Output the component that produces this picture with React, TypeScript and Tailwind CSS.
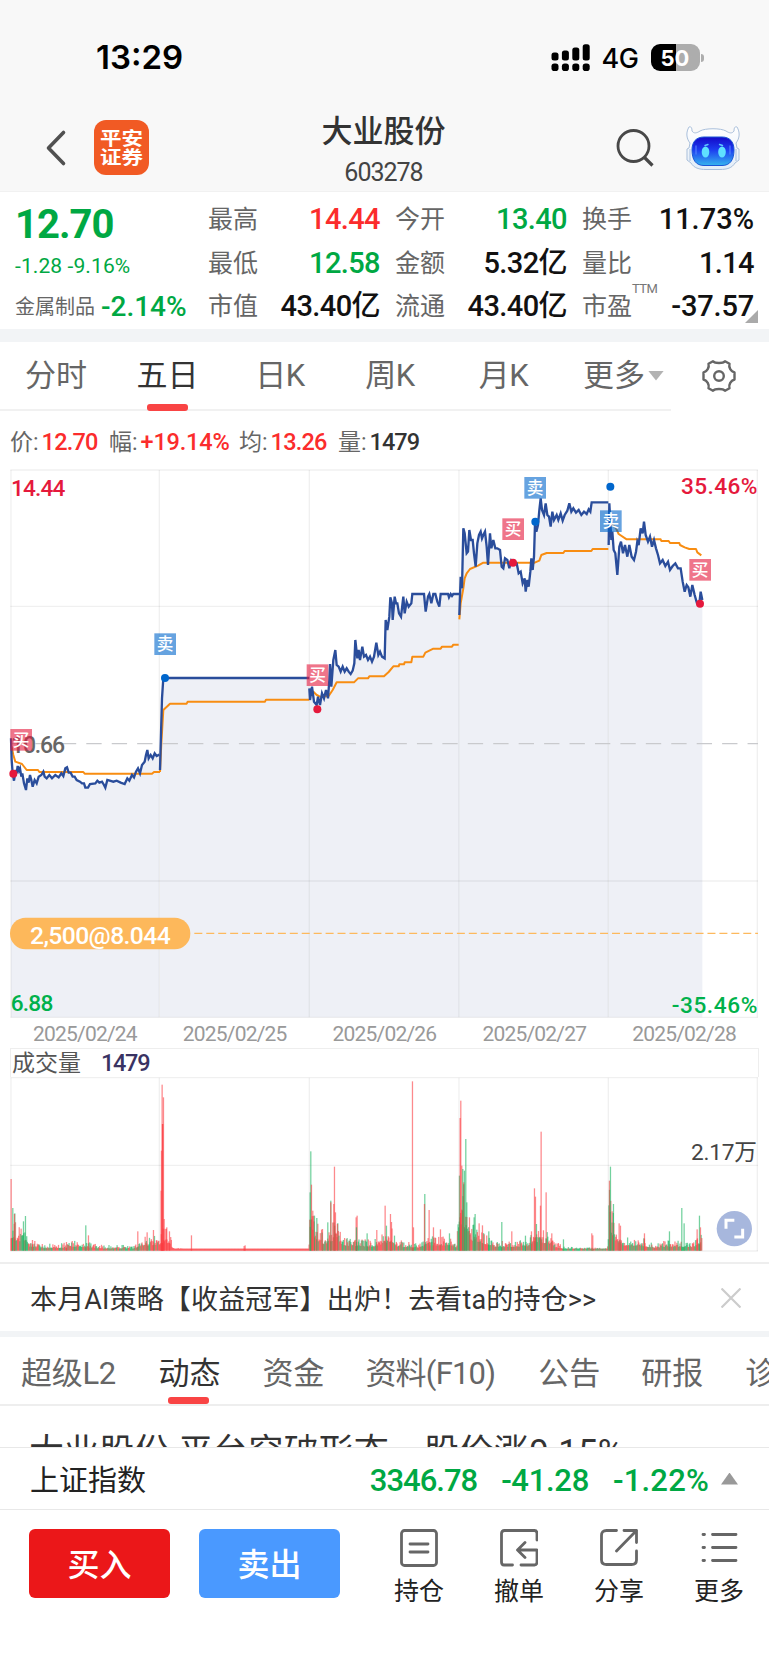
import React from 'react'

// price chart units: 3 per css pixel
const priceDays = [
    '33,835 35,900 38,940 42,962 47,930 50,940 53,918 57,932 60,925 64,950 67,940 72,970 78,990 82,955 86,968 90,945 94,960 98,980 104,960 110,970 116,950 124,945 130,935 134,950 140,955 148,945 156,955 166,945 176,952 184,940 190,948 196,925 201,922 206,938 212,938 218,950 224,950 230,960 240,965 246,970 252,970 256,983 264,983 270,972 286,970 292,962 298,968 306,965 312,975 316,983 322,960 340,965 350,962 362,968 374,972 382,955 388,962 396,945 402,952 408,935 414,925 420,940 426,915 434,905 438,885 442,870 446,895 452,885 458,895 464,880 470,888 478,884',
    '480,930 486,715 490,654 928,654',
    '928,685 930,720 936,680 942,725 950,735 954,710 960,735 966,700 972,715 978,690 984,715 988,660 990,612 994,680 1000,600 1006,570 1010,615 1016,620 1022,635 1028,620 1034,635 1040,625 1046,635 1052,642 1058,632 1063,610 1066,540 1072,595 1076,570 1080,600 1087,560 1092,590 1098,585 1104,600 1110,590 1116,605 1122,590 1129,548 1135,585 1140,575 1146,590 1154,595 1157,480 1162,510 1168,470 1171,412 1176,430 1178,480 1184,410 1188,430 1192,430 1197,460 1203,470 1210,410 1214,460 1220,425 1226,440 1234,430 1237,402 1272,402 1277,455 1284,410 1288,402 1294,430 1300,402 1306,402 1312,425 1318,440 1322,402 1344,402 1347,412 1352,402 1356,408 1360,402 1378,402',
    '1378,465 1382,350 1386,385 1390,205 1394,220 1400,280 1404,275 1408,210 1413,240 1418,240 1422,280 1427,320 1432,250 1437,225 1442,215 1446,235 1450,225 1455,215 1460,260 1464,315 1470,220 1474,265 1480,240 1486,265 1492,265 1500,270 1505,320 1510,325 1515,295 1522,300 1528,325 1534,300 1542,305 1550,310 1556,340 1562,335 1568,370 1574,355 1577,395 1582,360 1586,380 1591,335 1594,295 1598,330 1602,290 1605,190 1609,215 1614,195 1618,150 1622,115 1626,150 1632,165 1637,130 1642,165 1647,170 1652,200 1657,155 1662,180 1670,165 1675,180 1682,160 1688,182 1694,165 1702,152 1708,130 1714,155 1720,145 1728,158 1736,150 1744,165 1752,155 1760,162 1766,148 1771,155 1775,127 1825,127',
    '1826,255 1828,130 1834,240 1837,215 1841,270 1846,280 1852,345 1858,260 1863,245 1869,280 1875,255 1882,290 1888,255 1895,290 1902,300 1908,275 1912,245 1916,255 1922,205 1928,220 1932,185 1937,225 1944,245 1950,230 1956,260 1962,240 1968,265 1974,285 1980,310 1988,300 1996,318 2004,305 2010,330 2018,318 2026,310 2034,325 2042,325 2048,365 2054,395 2060,375 2065,382 2071,410 2077,375 2084,405 2091,430 2098,430 2102,395 2107,420',
]

const averageDays = [
    '35,860 40,885 46,905 66,912 80,930 114,930 118,936 250,936 254,941 456,941 462,936 480,936',
    '480,936 484,850 490,750 510,731 560,731 563,725 795,725 798,719 928,719',
    '928,700 940,695 950,705 960,710 986,708 998,690 1010,667 1062,667 1074,655 1104,655 1108,649 1152,649 1166,636 1180,619 1196,619 1198,613 1212,613 1214,607 1234,607 1237,590 1270,590 1276,578 1288,572 1300,566 1322,566 1326,560 1356,560 1360,554 1376,554',
    '1378,478 1382,430 1390,385 1394,355 1400,340 1410,327 1434,317 1450,308 1604,308 1618,302 1624,285 1640,279 1690,279 1694,273 1774,273 1778,267 1825,267',
    '1832,190 1848,205 1856,222 1880,238 1982,238 1984,243 2006,243 2010,249 2038,249 2040,255 2054,262 2068,267 2088,267 2092,277 2104,286',
]

const marks = [
    { type: '买', x: 31, y: 807, dotX: 40, dotY: 941 },
    { type: '卖', x: 463, y: 520, dotX: 495, dotY: 654 },
    { type: '买', x: 920, y: 613, dotX: 952, dotY: 748 },
    { type: '买', x: 1507, y: 175, dotX: 1539, dotY: 308 },
    { type: '卖', x: 1573, y: 51, dotX: 1606, dotY: 185 },
    { type: '卖', x: 1800, y: 151, dotX: 1831, dotY: 80 },
    { type: '买', x: 2068, y: 297, dotX: 2100, dotY: 431 },
]

const dayLines = [33, 478, 928, 1377, 1825, 2272]
const dates = ['2025/02/24', '2025/02/25', '2025/02/26', '2025/02/27', '2025/02/28']

// [x, height] upper bound of the quiet minutes
const volumeRange: [number, number][] = [
    [33, 105], [50, 80], [78, 70], [86, 36], [130, 20], [200, 24], [230, 34], [300, 18], [400, 18],
    [425, 40], [478, 52], [496, 75], [510, 50], [518, 12], [560, 4], [925, 6], [930, 130], [945, 95],
    [975, 50], [1008, 100], [1030, 42], [1120, 34], [1175, 80], [1190, 34], [1250, 22], [1290, 45],
    [1345, 44], [1370, 20], [1378, 240], [1392, 200], [1410, 90], [1450, 60], [1490, 28], [1580, 36],
    [1605, 70], [1640, 62], [1665, 28], [1700, 12], [1760, 10], [1822, 8], [1828, 190], [1845, 85],
    [1875, 40], [1920, 44], [1960, 22], [2010, 34], [2080, 28], [2108, 60],
]

const volumeSpikes: [number, number, number][] = [
    [33, 215, 1], [38, 128, 0], [44, 112, 0], [43, 110, 1], [70, 88, 0], [76, 104, 0], [97, 32, 1], [199, 26, 1],
    [257, 76, 0], [265, 46, 1], [413, 58, 1], [441, 55, 1], [460, 62, 1], [483, 180, 1], [484, 300, 1],
    [486, 498, 1], [487, 380, 1], [488, 380, 1], [490, 460, 1], [492, 95, 1], [500, 70, 1], [508, 58, 1], [574, 46, 1],
    [732, 14, 1], [735, 16, 1], [930, 175, 0], [932, 298, 0], [934, 198, 1], [938, 120, 1], [943, 105, 0],
    [950, 98, 0], [967, 65, 1], [983, 85, 0], [992, 150, 0], [992, 145, 1], [1001, 140, 1], [1003, 252, 1],
    [1006, 115, 1], [1012, 80, 1], [1068, 100, 1], [1071, 105, 1], [1069, 70, 0], [1101, 52, 0], [1130, 62, 1],
    [1155, 135, 1], [1159, 75, 0], [1171, 110, 1], [1174, 86, 1], [1237, 508, 1], [1240, 70, 1], [1274, 170, 0],
    [1273, 140, 1], [1287, 122, 1], [1300, 70, 1], [1321, 64, 1], [1348, 52, 0], [1378, 225, 0], [1382, 450, 1],
    [1380, 398, 1], [1385, 255, 1], [1388, 245, 0], [1391, 205, 1], [1393, 240, 0], [1397, 335, 0], [1400, 145, 0],
    [1408, 100, 1], [1422, 100, 0], [1425, 110, 0], [1437, 82, 1], [1447, 76, 1], [1466, 58, 0], [1505, 86, 0],
    [1535, 58, 1], [1576, 45, 0], [1594, 58, 1], [1603, 187, 1], [1606, 162, 1], [1609, 80, 0], [1623, 357, 1],
    [1621, 135, 1], [1638, 175, 1], [1655, 52, 1], [1690, 34, 0], [1775, 52, 1], [1778, 46, 1], [1828, 210, 1],
    [1831, 252, 0], [1836, 118, 1], [1840, 140, 0], [1857, 82, 1], [1861, 75, 1], [1933, 52, 1], [2008, 58, 0],
    [2045, 128, 0], [2052, 82, 0], [2091, 64, 1], [2098, 105, 0], [2101, 70, 1],
]

const quietVolume = () => {
    const bars: [number, number, number][] = []
    let seed = 41
    const next = () => {
        seed = (seed * 1103515245 + 12345) % 2147483648
        return seed / 2147483648
    }
    let k = 0
    for (let x = 33; x <= 2106; x += 1.87) {
        while (k < volumeRange.length - 2 && volumeRange[k + 1][0] < x) k++
        const [x0, h0] = volumeRange[k]
        const [x1, h1] = volumeRange[k + 1]
        const top = h0 + ((x - x0) / (x1 - x0)) * (h1 - h0)
        const r = next()
        const height = Math.max(6, top * (0.35 + 0.65 * r * r))
        const red = x > 478 && x < 928 ? 1 : next() > 0.48 ? 1 : 0
        bars.push([x, height, red])
    }
    return bars
}

const volumeBars = [...quietVolume(), ...volumeSpikes]

const quotes = [
    { label: '最高', value: '14.44', color: 'text-[#fb2c2c]' },
    { label: '今开', value: '13.40', color: 'text-[#00a843]' },
    { label: '换手', value: '11.73%', color: 'text-[#111] tracking-[0px]' },
    { label: '最低', value: '12.58', color: 'text-[#00a843]' },
    { label: '金额', value: '5.32亿', color: 'text-[#111]' },
    { label: '量比', value: '1.14', color: 'text-[#111]' },
    { label: '市值', value: '43.40亿', color: 'text-[#111]' },
    { label: '流通', value: '43.40亿', color: 'text-[#111]' },
    { label: '市盈', value: '-37.57', color: 'text-[#111] tracking-[-0.2px]', sup: 'TTM' },
]

const StatusBar = () => (
    <div className="h-[100px] pt-[15px] pl-[96px] pr-[65px] flex items-center justify-between font-[family-name:Inter,sans-serif] text-black">
        <span className="text-[33px] leading-none font-semibold">13:29</span>
        <div className="flex items-center">
            <svg className="w-[39px] h-[28px]" viewBox="0 0 39 28">
                <rect x="0.5" y="8.5" width="7" height="8" rx="2.5" />
                <rect x="10.9" y="6.5" width="7" height="10" rx="2.5" />
                <rect x="21.3" y="3.5" width="7" height="13" rx="2.5" />
                <rect x="31.7" y="0.3" width="7" height="16.2" rx="2.5" />
                {[0.5, 10.9, 21.3, 31.7].map((x) => (
                    <rect key={x} x={x} y="19.5" width="7" height="7.5" rx="2.8" />
                ))}
            </svg>
            <span className="ml-[12px] pt-[2px] w-[38px] text-[27px] leading-none font-medium tracking-[-0.5px]">4G</span>
            <div className="ml-[11px] w-[49px] h-[27px] rounded-[9px] bg-linear-to-r from-black from-51% to-[#adadad] to-51% flex items-center justify-center text-[22px] font-bold text-white leading-none">
                50
            </div>
            <div className="ml-[1.5px] w-[3px] h-[8px] rounded-r-full bg-[#adadad]" />
        </div>
    </div>
)

const Robot = () => (
    <svg className="w-[54px] h-[44px]" viewBox="0 0 54 44">
        <defs>
            <linearGradient id="face" x1="0" y1="0" x2="0" y2="1">
                <stop offset="0" stopColor="#1408c8" />
                <stop offset="0.45" stopColor="#1c3df0" />
                <stop offset="1" stopColor="#35b4ee" />
            </linearGradient>
            <linearGradient id="shell" x1="0" y1="0" x2="0" y2="1">
                <stop offset="0" stopColor="#fff" />
                <stop offset="1" stopColor="#e3edf8" />
            </linearGradient>
        </defs>
        <path
            d="M3 1C0 6 0 12 4 17L3 22 1 23V34L5 37C8 42 13 43.5 20 43.5H34C41 43.5 46 42 49 37L53 34V23L51 22 50 17C54 12 54 6 51 1 49 0 48 2 48 5 46 8 43 7 40 5 35 2 19 2 14 5 11 7 8 8 6 5 6 2 5 0 3 1Z"
            fill="url(#shell)"
            stroke="#a9bfdb"
            strokeWidth="1"
        />
        <path d="M4 23V35M50 23V35" stroke="#a9bfdb" strokeWidth="1" />
        <path d="M18 11H36C44 11 48 16 48 24 48 34 44 39.5 36 39.5H18C10 39.5 6 34 6 24 6 16 10 11 18 11Z" fill="url(#face)" stroke="#1a57d6" strokeWidth="1" />
        <path d="M10 20V28M44 20V28" stroke="#5a86ff" strokeWidth="1.5" strokeLinecap="round" opacity="0.7" />
        <ellipse cx="19.5" cy="26" rx="3.8" ry="5.5" fill="#5fe0ff" />
        <ellipse cx="36" cy="26" rx="3.8" ry="5.5" fill="#5fe0ff" />
        <path d="M19 19.5L22 18.5M33.5 18.5L36.5 19.5" stroke="#5fc8ff" strokeWidth="1.4" strokeLinecap="round" />
    </svg>
)

const Header = () => (
    <div className="h-[92px] pl-[45px] pr-[29px] flex items-start justify-between">
        <div className="w-[182px] pt-[20px] flex items-center gap-[27px]">
            <svg className="w-[22px] h-[38px]" viewBox="0 0 22 38" fill="none" stroke="#505050" strokeWidth="3.6" strokeLinecap="round" strokeLinejoin="round">
                <path d="M18.5 3.5L3.5 19L18.5 34.5" />
            </svg>
            <div className="w-[55px] h-[55px] rounded-[12px] bg-[#f15a24] text-white text-[21.5px] leading-[19px] font-bold flex flex-col items-center justify-center">
                <span className="scale-y-85">平安</span>
                <span className="scale-y-85">证券</span>
            </div>
        </div>
        <div className="pt-[16px] flex flex-col items-center">
            <span className="text-[31px] leading-[32px] font-medium text-[#333]">大业股份</span>
            <span className="mt-[12px] text-[25px] leading-[26px] tracking-[-1px] text-[#444]">603278</span>
        </div>
        <div className="w-[200px] pt-[26px] flex items-center justify-end gap-[32px]">
            <svg className="w-[38px] h-[38px]" viewBox="0 0 38 38" fill="none" stroke="#484848" strokeWidth="2.8">
                <circle cx="17.5" cy="17" r="15.5" />
                <path d="M28 28L36.5 36.5" strokeWidth="3.2" />
            </svg>
            <Robot />
        </div>
    </div>
)

const QuotePanel = () => (
    <div className="relative h-[137px] bg-white flex pl-[15px] pr-[15px]">
        <div className="w-[193px] flex flex-col">
            <span className="mt-[11px] text-[40px] leading-[44px] font-bold tracking-[-1px] text-[#00a843]">12.70</span>
            <span className="mt-[7px] text-[21px] leading-[24px] tracking-[0.1px] text-[#00a843]">-1.28 -9.16%</span>
            <div className="mt-[15px] flex items-center gap-[6px] leading-[28px] whitespace-nowrap">
                <span className="text-[20px] text-[#666]">金属制品</span>
                <span className="text-[28px] font-medium tracking-[0px] text-[#00a843]">-2.14%</span>
            </div>
        </div>
        <div className="pt-[6px] w-[546px] grid grid-cols-[172px_172px_172px] gap-x-[15px] auto-rows-[43.5px]">
            {quotes.map((item) => (
                <div key={item.label} className="relative flex items-center justify-between leading-none tracking-[-0.6px]">
                    <span className="text-[25px] text-[#666] tracking-normal">{item.label}</span>
                    {item.sup && <span className="absolute left-[50px] top-[-3px] text-[13px] text-[#777]">{item.sup}</span>}
                    <span className={`text-[29px] font-medium ${item.color}`}>{item.value}</span>
                </div>
            ))}
        </div>
        <div className="absolute right-[11px] bottom-[6px] w-[13px] h-[13px] bg-[#aaa] [clip-path:polygon(100%_0,100%_100%,0_100%)]" />
    </div>
)

const Gear = () => (
    <svg className="w-[34px] h-[34px]" viewBox="0 0 34 34" fill="none" stroke="#666" strokeWidth="2.4" strokeLinejoin="round">
        <path d="M11 2.2C13 4.6 21 4.6 23 2.2L27.5 4.8C26.5 8.5 28.8 12.3 32.5 13.5V20.5C28.8 21.7 26.5 25.5 27.5 29.2L23 31.8C21 29.4 13 29.4 11 31.8L6.5 29.2C7.5 25.5 5.2 21.7 1.5 20.5V13.5C5.2 12.3 7.5 8.5 6.5 4.8Z" />
        <circle cx="17" cy="17" r="4.8" />
    </svg>
)

const PeriodTabs = () => (
    <div className="h-[70px] flex text-[31px] leading-none text-[#666]">
        <div className="w-[671px] h-[69px] border-b-2 border-[#f1f1f1] flex items-center">
            <span className="w-[112px] text-center">分时</span>
            <div className="relative w-[111px] h-full flex items-center justify-center text-[#333]">
                五日
                <span className="absolute bottom-[-2px] left-[35px] w-[41px] h-[7px] rounded-[3px] bg-[#f94444]" />
            </div>
            <span className="w-[114px] text-center tracking-[-0.5px]">日K</span>
            <span className="w-[106px] text-center tracking-[-0.5px]">周K</span>
            <span className="w-[121px] text-center tracking-[-0.5px]">月K</span>
            <span className="ml-[19px]">更多</span>
            <span className="ml-[3px] w-[16px] h-[10px] bg-[#b3b3b3] [clip-path:polygon(0_0,100%_0,50%_100%)]" />
        </div>
        <div className="pl-[31px] pb-[2px] flex items-center">
            <Gear />
        </div>
    </div>
)

const info = [
    { label: '价', value: '12.70', color: 'text-[#fb2c2c] tracking-[-0.8px]', width: 'w-[99px]' },
    { label: '幅', value: '+19.14%', color: 'text-[#fb2c2c] tracking-[-0.2px]', width: 'w-[130px]' },
    { label: '均', value: '13.26', color: 'text-[#fb2c2c] tracking-[-0.8px]', width: 'w-[99px]' },
    { label: '量', value: '1479', color: 'text-[#333] tracking-[-1px]', width: 'w-[90px]' },
]

const InfoLine = () => (
    <div className="h-[48px] pt-[11px] pl-[10px] flex leading-[38px] whitespace-nowrap">
        {info.map((item) => (
            <div key={item.label} className={`${item.width} text-[23px] text-[#666]`}>
                {item.label}:
                <span className={`ml-[3px] text-[23.5px] font-medium ${item.color}`}>{item.value}</span>
            </div>
        ))}
    </div>
)

const PriceChart = () => (
    <svg className="block w-[769px] h-[560px]" viewBox="0 0 2307 1680">
        {priceDays.map((line) => {
            const points = line.split(' ')
            const first = points[0].split(',')[0]
            const last = points[points.length - 1].split(',')[0]
            return <polygon key={line} points={`${first},1672 ${line} ${last},1672`} fill="#eef0f6" />
        })}
        <g stroke="#000" strokeOpacity="0.06" strokeWidth="4">
            {[30, 439, 1263, 1672].map((y) => (
                <path key={y} d={`M31 ${y}H2274`} />
            ))}
            {dayLines.map((x) => (
                <path key={x} d={`M${x} 30V1672`} />
            ))}
        </g>
        <path d="M30 851H2274" stroke="#c9cacd" strokeWidth="4" strokeDasharray="46 30.3" />
        <path d="M583 1420H2274" stroke="#fdb95d" strokeWidth="4" strokeDasharray="24 11.8" />
        <text x="33" y="878" fontSize="69" fontWeight="500" textLength="162" fill="#666">10.66</text>
        <g fill="none" strokeWidth="6" strokeLinejoin="round">
            {averageDays.map((line) => (
                <polyline key={line} points={line} stroke="#f88d12" />
            ))}
            {priceDays.map((line) => (
                <polyline key={line} points={line} stroke="#2a4d9b" strokeWidth="7" strokeLinejoin="miter" />
            ))}
        </g>
        {marks.map((mark) => {
            const color = mark.type === '买' ? '#e5193c' : '#0066cc'
            return (
                <g key={mark.x}>
                    <circle cx={mark.dotX} cy={mark.dotY} r="12" fill={color} />
                    <rect x={mark.x} y={mark.y} width="65" height="65" fill={color} fillOpacity="0.6" />
                    <text x={mark.x + 32.5} y={mark.y + 51} fontSize="50" fontWeight="500" textAnchor="middle" fill="#fff">{mark.type}</text>
                </g>
            )
        })}
        <rect x="30" y="1373" width="541" height="95" rx="47" fill="#fdb85b" />
        <text x="90" y="1451" fontSize="74" textLength="422" fontWeight="500" fill="#fff">2,500@8.044</text>
        <g fontSize="68" fontWeight="500">
            <text x="33" y="107" textLength="163" fill="#e5193c">14.44</text>
            <text x="2043" y="101" textLength="229" fill="#e5193c">35.46%</text>
            <text x="32" y="1652" textLength="128" fill="#00b14b">6.88</text>
            <text x="2015" y="1658" textLength="257" fill="#00b14b">-35.46%</text>
        </g>
    </svg>
)

const VolumeChart = () => (
    <div className="relative">
        <div className="h-[29px] mx-[10px] mt-[4px] border-x border-t border-[#eee] flex items-center pl-[1px] leading-none">
            <span className="text-[23px] text-[#555]">成交量</span>
            <span className="ml-[20px] pt-[1px] text-[23.5px] tracking-[-1.3px] font-medium text-[#3a3363]">1479</span>
        </div>
        <svg className="block w-[769px] h-[178px]" viewBox="0 591 2307 534">
            <g stroke="#000" strokeOpacity="0.06" strokeWidth="4">
                {[593, 856, 1113].map((y) => (
                    <path key={y} d={`M31 ${y}H2274`} />
                ))}
                {dayLines.map((x) => (
                    <path key={x} d={`M${x} 593V1113`} />
                ))}
            </g>
            {volumeBars.map(([x, height, red], i) => (
                <rect key={i} x={x - 1.5} y={1112 - height} width="3.8" height={height} fill={red ? '#fb3b3f' : '#16b35e'} fillOpacity="0.6" />
            ))}
            <text x="2073" y="840" fontSize="68" textLength="198" fill="#444">2.17万</text>
            <circle cx="2203" cy="1046" r="53" fill="#a7b7dd" />
            <path d="M2178 1046V1021H2203M2228 1046V1071H2203" fill="none" stroke="#fff" strokeWidth="9" />
        </svg>
    </div>
)

const tabs = [
    { name: '超级L2', left: 'ml-[21px] tracking-[-0.3px]' },
    { name: '动态', left: 'ml-[42.5px]', active: true },
    { name: '资金', left: 'ml-[42px]' },
    { name: '资料(F10)', left: 'ml-[41px] tracking-[-0.8px]' },
    { name: '公告', left: 'ml-[43px]' },
    { name: '研报', left: 'ml-[41px]' },
    { name: '诊股', left: 'ml-[42px]' },
]

const NewsSection = () => (
    <>
        <div className="h-[69px] border-t-2 border-[#eee] pl-[30px] pr-[28px] flex items-center justify-between text-[#333]">
            <span className="pt-[5px] text-[27px] tracking-[0.15px] whitespace-nowrap">本月AI策略【收益冠军】出炉！去看ta的持仓&gt;&gt;</span>
            <svg className="w-[20px] h-[20px]" viewBox="0 0 20 20" stroke="#ccc" strokeWidth="2.2">
                <path d="M0.5 0.5L19.5 19.5M19.5 0.5L0.5 19.5" />
            </svg>
        </div>
        <div className="h-[6px] bg-[#f2f4f6]" />
        <div className="h-[69px] border-b-2 border-[#eee] flex items-center overflow-hidden whitespace-nowrap text-[31px] leading-none text-[#666]">
            {tabs.map((tab) => (
                <div key={tab.name} className={`relative h-full pt-[5px] shrink-0 flex items-center ${tab.left} ${tab.active ? 'text-[#333]' : ''}`}>
                    {tab.name}
                    {tab.active && <span className="absolute bottom-0 left-[10px] w-[41px] h-[7px] rounded-[3px] bg-[#f94444]" />}
                </div>
            ))}
        </div>
        <div className="h-[41px] pt-[25px] pl-[29px] overflow-hidden whitespace-nowrap text-[35px] leading-[44px] tracking-[0.1px] text-[#333]">
            大业股份 平台突破形态，股价涨9.15%
        </div>
    </>
)

const IndexRow = () => (
    <div className="h-[63px] border-y border-[#e8e8e8] pl-[30px] pr-[31px] flex items-center text-[29px] leading-none text-[#222]">
        <span className="pt-[5px]">上证指数</span>
        <div className="ml-auto pt-[3px] flex items-center gap-[24px] text-[31px] font-medium text-[#00a843]">
            <span className="tracking-[-1px]">3346.78</span>
            <span className="tracking-[-0.3px]">-41.28</span>
            <span className="tracking-[0.2px]">-1.22%</span>
        </div>
        <span className="ml-[12px] w-[17px] h-[12px] bg-[#999] [clip-path:polygon(50%_0,100%_100%,0_100%)]" />
    </div>
)

const actions = [
    {
        name: '持仓',
        icon: (
            <>
                <rect x="1.5" y="1.5" width="35" height="35" rx="3" />
                <path d="M10 15H28M10 23H28" />
            </>
        ),
    },
    {
        name: '撤单',
        icon: <path d="M12.5 36H4Q1.500 36 1.500 33V4.500Q1.500 1.500 4.500 1.500H34.500Q37 1.500 37 4.500V11M21 36H34.500Q37 36 37 33V21H18M25 13.500L17.500 21L25 28.500" />,
    },
    {
        name: '分享',
        icon: <path d="M16.500 1.500H6.500Q1.500 1.500 1.500 6.500V31Q1.500 35.500 6.500 35.500H31.500Q36.500 35.500 36.500 31V22M24 1.500H36.500V13.500M36.500 1.500L16.500 22" />,
    },
    {
        name: '更多',
        icon: <path d="M3 5.500H4.500M3 18.500H4.500M3 31.500H4.500M12.500 5.500H36M12.500 18.500H36M12.500 31.500H36" />,
    },
]

const ActionBar = () => (
    <div className="h-[155px] pt-[19px] pl-[29px] flex items-start">
        <div className="w-[141px] h-[69px] rounded-[6px] bg-[#eb1719] text-white text-[32px] font-medium flex items-center justify-center pt-[3px]">买入</div>
        <div className="ml-[29px] w-[141px] h-[69px] rounded-[6px] bg-[#4a99ff] text-white text-[32px] font-medium flex items-center justify-center pt-[3px]">卖出</div>
        <div className="ml-[29px] grid grid-cols-[100px_100px_100px_100px]">
            {actions.map((action) => (
                <div key={action.name} className="flex flex-col items-center">
                    <svg className="w-[38px] h-[38px]" viewBox="0 0 38 38" fill="none" stroke="#666" strokeWidth="2.8" strokeLinecap="round" strokeLinejoin="round">
                        {action.icon}
                    </svg>
                    <span className="mt-[12px] text-[25px] leading-[26px] text-[#222]">{action.name}</span>
                </div>
            ))}
        </div>
    </div>
)

const App = () => {
    return (
        <main className="w-[769px] h-[1665px] overflow-hidden bg-white font-[family-name:Roboto,'Noto_Sans_CJK_SC',sans-serif]">
            <div className="h-[192px] bg-[#f8f8f8] border-b border-[#f1f1f1]">
                <StatusBar />
                <Header />
            </div>
            <QuotePanel />
            <div className="h-[13px] bg-[#f2f4f6]" />
            <PeriodTabs />
            <InfoLine />
            <PriceChart />
            <div className="h-[24px] mx-[10px] grid grid-cols-5 text-center text-[21px] leading-[28px] tracking-[-0.8px] text-[#999]">
                {dates.map((date) => (
                    <span key={date}>{date}</span>
                ))}
            </div>
            <VolumeChart />
            <div className="h-[7px]" />
            <NewsSection />
            <IndexRow />
            <ActionBar />
        </main>
    )
}

export default App
